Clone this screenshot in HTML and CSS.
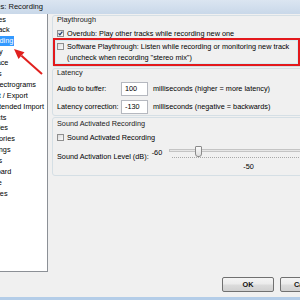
FILE: index.html
```html
<!DOCTYPE html>
<html lang="en">
<head>
    <meta charset="UTF-8">
    <meta name="viewport" content="width=device-width, initial-scale=1.0">
    <title>Preferences: Recording</title>
    <link rel="stylesheet" href="styles.css">
</head>
<body>
    <div class="window">
        <div class="titlebar"><span class="title">Audacity Preferences: Recording</span></div>

        <div class="client">
            <div class="main">
                <aside class="tree">
                    <ul class="tree-list">
                        <li>Devices</li>
                        <li>Playback</li>
                        <li><span class="selected">Recording</span></li>
                        <li>Quality</li>
                        <li>Interface</li>
                        <li>Tracks</li>
                        <li class="child">Spectrograms</li>
                        <li>Import / Export</li>
                        <li class="child">Extended Import</li>
                        <li>Projects</li>
                        <li>Libraries</li>
                        <li>Directories</li>
                        <li>Warnings</li>
                        <li>Effects</li>
                        <li>Keyboard</li>
                        <li>Mouse</li>
                        <li>Modules</li>
                    </ul>
                    <svg class="arrow" width="48" height="70" viewBox="0 0 48 70">
                        <line x1="21.5" y1="41.7" x2="42" y2="60" stroke="#e0201e" stroke-width="2" />
                        <polygon points="14,35 18.5,45 24.5,38.3" fill="#e0201e" />
                    </svg>
                </aside>

                <main class="page">
                    <section class="group group-play">
                        <div class="group-label">Playthrough</div>
                        <label class="check-row">
                            <span class="checkbox">
                                <svg width="5" height="5" viewBox="0 0 5 5"><path d="M0.6 2.4 L1.9 3.9 L4.4 0.6" fill="none" stroke="#1b3b6f" stroke-width="1.2" /></svg>
                            </span>
                            <span>Overdub: Play other tracks while recording new one</span>
                        </label>
                        <div class="highlight">
                            <label class="check-row multi">
                                <span class="checkbox"></span>
                                <span>Software Playthrough: Listen while recording or monitoring new track<br>(uncheck when recording "stereo mix")</span>
                            </label>
                        </div>
                    </section>

                    <section class="group group-latency">
                        <div class="group-label">Latency</div>
                        <div class="field-row">
                            <span class="field-label">Audio to buffer:</span>
                            <span class="text-input">100</span>
                            <span>milliseconds (higher = more latency)</span>
                        </div>
                        <div class="field-row">
                            <span class="field-label">Latency correction:</span>
                            <span class="text-input">-130</span>
                            <span>milliseconds (negative = backwards)</span>
                        </div>
                    </section>

                    <section class="group group-sound">
                        <div class="group-label">Sound Activated Recording</div>
                        <label class="check-row">
                            <span class="checkbox"></span>
                            <span>Sound Activated Recording</span>
                        </label>
                        <div class="slider-row">
                            <span class="level-label">Sound Activation Level (dB):</span>
                            <span class="min-label">-60</span>
                            <div class="slider">
                                <div class="track"></div>
                                <div class="thumb"></div>
                                <div class="ticks"></div>
                                <div class="value-label">-50</div>
                            </div>
                        </div>
                    </section>
                </main>
            </div>

            <div class="buttons">
                <button class="btn">OK</button>
                <button class="btn">Cancel</button>
            </div>
        </div>

        <div class="frame-bottom"></div>
    </div>
</body>
</html>
```

FILE: styles.css
```css
body {
    margin: 0;
    width: 300px;
    height: 300px;
    overflow: hidden;
    background: #f0f0f0;
    font-family: "Liberation Sans", Arial, sans-serif;
    font-size: 7.3px;
    color: #000;
}

.window {
    width: 300px;
    height: 300px;
    display: flex;
    flex-direction: column;
}

.titlebar {
    height: 14px;
    line-height: 14px;
    background: linear-gradient(#dbe5f1, #c9d8e9);
    white-space: nowrap;
    overflow: hidden;
    font-size: 7.6px;
}
.title {
    display: inline-block;
    margin-left: -68px;
    color: #111;
}

.client {
    flex: 1;
    display: flex;
    flex-direction: column;
}
.main {
    display: flex;
    gap: 4px;
    height: 258px;
}

/* preferences tree */
.tree {
    position: relative;
    width: 47px;
    flex: none;
    background: #fff;
    border-right: 1px solid #8c9096;
    border-bottom: 1px solid #8c9096;
    overflow: hidden;
}
.tree-list {
    list-style: none;
    margin: 0 0 0 -20px;
    padding: 0.5px 0 0 0;
    white-space: nowrap;
}
.tree-list li {
    height: 10.9px;
    line-height: 10.9px;
}
.tree-list li.child {
    padding-left: 10.5px;
}
.selected {
    display: inline-block;
    line-height: 10px;
    margin-left: -1px;
    padding: 0 1px;
    background: #3399ff;
    color: #fff;
}
.arrow {
    position: absolute;
    left: 0;
    top: 0;
}

/* right page */
.page {
    width: 252px;
    flex: none;
    padding-top: 1px;
}
.group {
    border: 1px solid #d5dfe5;
    border-radius: 3px;
    padding-left: 4px;
    margin-bottom: 1px;
}
.group-label {
    line-height: 8px;
    color: #1a1a1a;
}
.group-latency {
    padding-bottom: 1.5px;
}
.group-sound {
    margin-top: 1px;
    padding-top: 1.5px;
    padding-bottom: 2px;
}

.check-row {
    display: flex;
    align-items: center;
    gap: 3px;
    line-height: 9px;
    margin-top: 4.5px;
    white-space: nowrap;
}
.check-row.multi {
    align-items: flex-start;
    margin-top: 0;
    line-height: 11px;
}
.check-row.multi .checkbox {
    margin-top: 2.5px;
}
.group-sound .check-row {
    margin-top: 5.5px;
}
.checkbox {
    width: 5px;
    height: 5px;
    flex: none;
    border: 1px solid #8f8f8f;
    background: linear-gradient(135deg, #dcdcdc, #fbfbfb);
    display: flex;
    align-items: center;
    justify-content: center;
}

.highlight {
    margin: 0.5px 0 0 -4px;
    width: 240px;
    padding: 0.5px 1px 1.5px 2px;
    border: 2px solid #e3191c;
    box-shadow: inset 0 0 0 1px #d3ecf3;
}

.field-row {
    display: flex;
    align-items: center;
    gap: 2px;
    margin-top: 4.5px;
    white-space: nowrap;
}
.field-row + .field-row {
    margin-top: 4px;
}
.field-label {
    width: 62px;
}
.text-input {
    width: 22px;
    height: 12px;
    line-height: 12px;
    padding-left: 3px;
    margin-right: 3px;
    border: 1px solid #b5b8bf;
    background: #fff;
}

.slider-row {
    display: flex;
    align-items: flex-start;
    margin-top: 3.5px;
    height: 27px;
    white-space: nowrap;
}
.level-label {
    margin-top: 7px;
    line-height: 8px;
}
.min-label {
    margin: 3px 0 0 3px;
    line-height: 8px;
}
.slider {
    position: relative;
    margin-left: 7px;
    width: 140px;
    flex: none;
}
.track {
    margin-top: 3px;
    height: 1px;
    border: 1px solid #c4c4c4;
    border-right: none;
    background: #e6e6e6;
}
.thumb {
    position: absolute;
    left: 26px;
    top: 0;
    width: 5px;
    height: 9px;
    border: 1px solid #8a8a8a;
    border-radius: 1px 1px 3px 3px;
    background: linear-gradient(#fafafa, #dedede);
}
.ticks {
    margin: 5px 0 0 3px;
    border-top: 1px dotted #a8a8a8;
}
.value-label {
    margin: 5px 0 0 74px;
    line-height: 8px;
}

/* dialog buttons */
.buttons {
    display: flex;
    gap: 6px;
    margin-top: 5px;
    padding-left: 222px;
}
.btn {
    width: 52px;
    height: 15px;
    flex: none;
    padding: 0;
    border: 1px solid #707070;
    border-radius: 2px;
    background: linear-gradient(#f4f4f4 0%, #ebebeb 48%, #dcdcdc 52%, #d0d0d0 100%);
    font-family: "Liberation Sans", Arial, sans-serif;
    font-size: 7.3px;
    font-weight: bold;
    color: #111;
}

.frame-bottom {
    height: 3px;
    background: #b4cde8;
}
```
